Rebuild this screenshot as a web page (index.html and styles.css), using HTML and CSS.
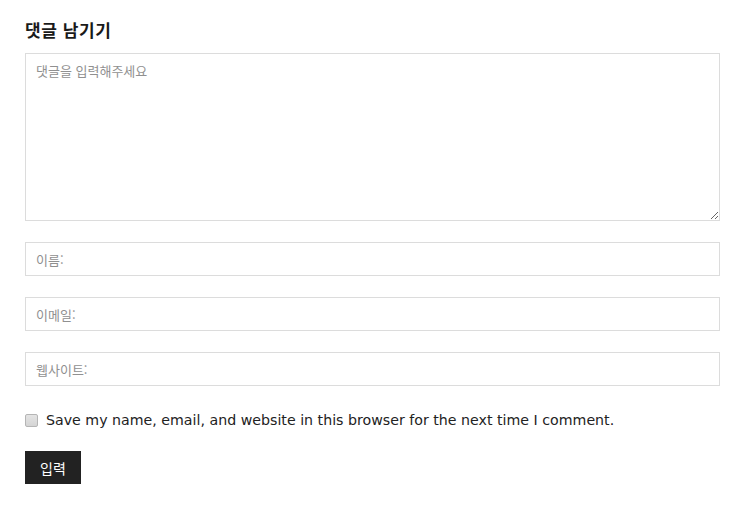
FILE: index.html
```html
<!DOCTYPE html>
<html lang="ko">
<head>
<meta charset="utf-8">
<title>댓글 남기기</title>
<link rel="stylesheet" href="styles.css">
</head>
<body>
<div class="respond">
  <h3 class="reply-title">댓글 남기기</h3>
  <form class="comment-form">
    <textarea class="field field-comment" placeholder="댓글을 입력해주세요"></textarea>
    <input class="field field-line" type="text" placeholder="이름:">
    <input class="field field-line" type="email" placeholder="이메일:">
    <input class="field field-line" type="url" placeholder="웹사이트:">
    <label class="consent">
      <input type="checkbox" class="consent-box">
      <span>Save my name, email, and website in this browser for the next time I comment.</span>
    </label>
    <div class="submit-row">
      <button type="button" class="submit">입력</button>
    </div>
  </form>
</div>
</body>
</html>
```
FILE: styles.css
```css
html, body {
  margin: 0;
  padding: 0;
  background: #fff;
}

body {
  font-family: "DejaVu Sans", Verdana, "Noto Sans CJK KR", sans-serif;
  color: #222;
}

.respond {
  padding: 19px 14px 0 25px;
}

.reply-title {
  margin: 0 0 12px;
  font-family: "Noto Sans CJK KR", sans-serif;
  font-size: 17px;
  font-weight: 700;
  letter-spacing: 0.6px;
  line-height: 22px;
  color: #1a1a1a;
}

.comment-form {
  display: flex;
  flex-direction: column;
}

.field {
  box-sizing: border-box;
  width: 100%;
  border: 1px solid #dcdcdc;
  background: #fff;
  font-family: "Noto Sans CJK KR", sans-serif;
  font-size: 13px;
  color: #333;
  padding: 0 10px;
  margin: 0;
  outline: none;
}

.field::placeholder {
  color: #909090;
}

.field-comment {
  height: 168px;
  padding-top: 7px;
  line-height: 20px;
  resize: vertical;
  margin-bottom: 21px;
}

.field-line {
  height: 34px;
  margin-bottom: 21px;
}

.consent {
  display: flex;
  align-items: center;
  gap: 8px;
  margin-top: 3px;
  font-size: 14.2px;
  line-height: 20px;
  color: #222;
}

.consent-box {
  appearance: none;
  -webkit-appearance: none;
  box-sizing: border-box;
  width: 13px;
  height: 13px;
  margin: 0;
  border: 1px solid #b5b5b5;
  border-radius: 2px;
  background: linear-gradient(#e4e4e4, #d4d4d4);
}

.submit-row {
  margin-top: 21px;
}

.submit {
  width: 56px;
  height: 33px;
  border: 0;
  background: #222;
  color: #fff;
  font-family: "Noto Sans CJK KR", sans-serif;
  font-size: 14px;
  padding: 0;
}
```
